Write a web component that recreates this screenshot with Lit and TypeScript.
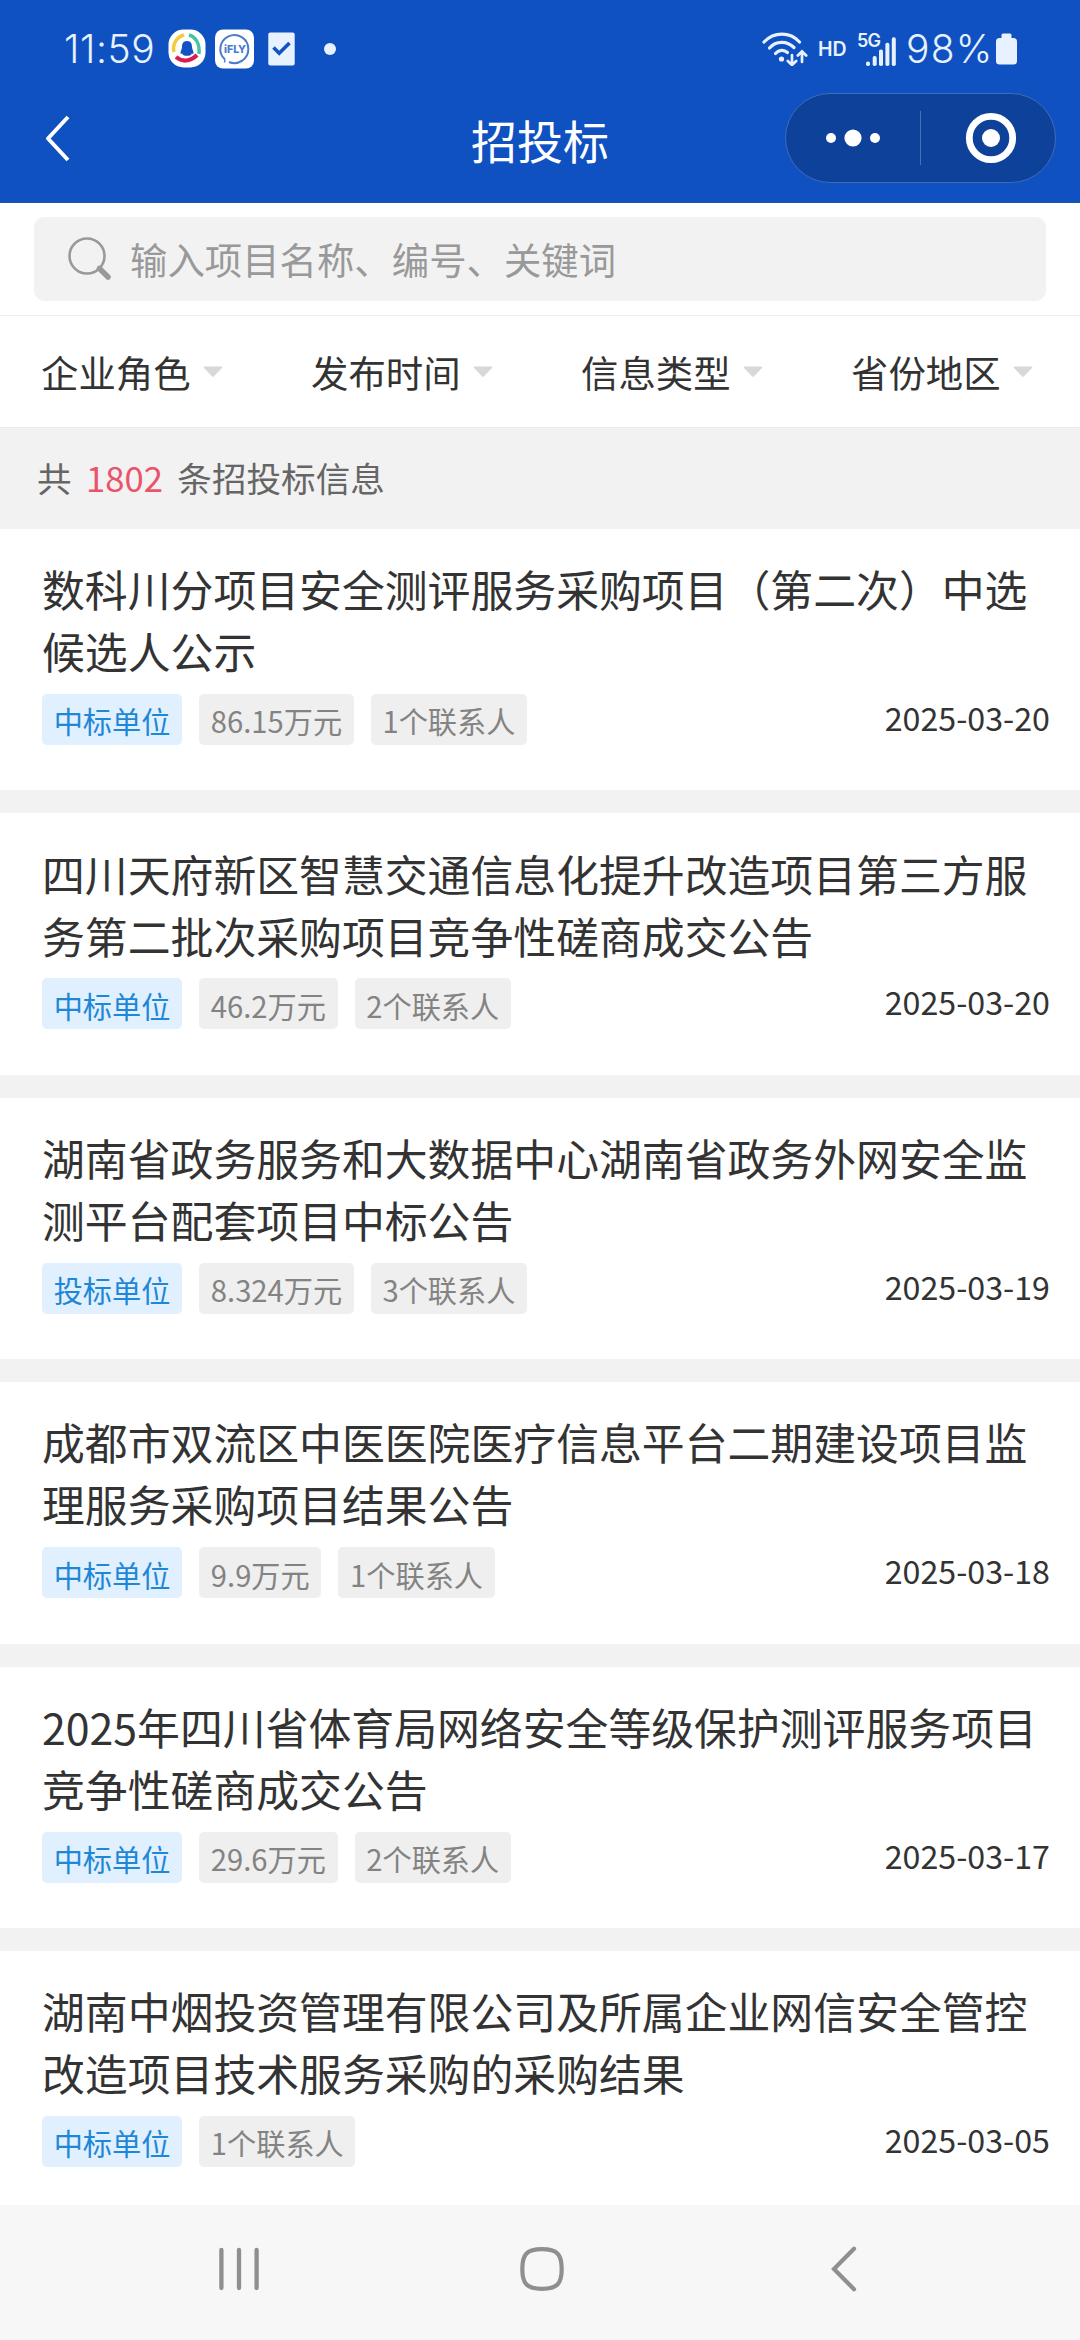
import { LitElement, html, css, svg } from "lit";
import { customElement, property } from "lit/decorators.js";

interface Bid {
  title: string;
  role: string;
  tags: string[];
  date: string;
}

const FILTERS = ["企业角色", "发布时间", "信息类型", "省份地区"];

const BIDS: Bid[] = [
  { title: "数科川分项目安全测评服务采购项目（第二次）中选候选人公示", role: "中标单位", tags: ["86.15万元", "1个联系人"], date: "2025-03-20" },
  { title: "四川天府新区智慧交通信息化提升改造项目第三方服务第二批次采购项目竞争性磋商成交公告", role: "中标单位", tags: ["46.2万元", "2个联系人"], date: "2025-03-20" },
  { title: "湖南省政务服务和大数据中心湖南省政务外网安全监测平台配套项目中标公告", role: "投标单位", tags: ["8.324万元", "3个联系人"], date: "2025-03-19" },
  { title: "成都市双流区中医医院医疗信息平台二期建设项目监理服务采购项目结果公告", role: "中标单位", tags: ["9.9万元", "1个联系人"], date: "2025-03-18" },
  { title: "2025年四川省体育局网络安全等级保护测评服务项目竞争性磋商成交公告", role: "中标单位", tags: ["29.6万元", "2个联系人"], date: "2025-03-17" },
  { title: "湖南中烟投资管理有限公司及所属企业网信安全管控改造项目技术服务采购的采购结果", role: "中标单位", tags: ["1个联系人"], date: "2025-03-05" },
];

@customElement("status-bar")
class StatusBar extends LitElement {
  static styles = css`
    :host { display: block; }
    .bar {
      display: flex; align-items: center; justify-content: space-between;
      box-sizing: border-box; height: 88px; padding: 10px 63px 0 64px;
      color: #e8f1ff; font-family: Inter, Roboto, sans-serif;
    }
    .group { display: flex; align-items: center; height: 78px; }
    .big { font-size: 39px; font-weight: 350; line-height: 46px; white-space: nowrap; }
    .time { width: 104px; letter-spacing: 0.6px; }
    .pct { width: 89px; letter-spacing: 1.2px; }
    svg { display: block; flex: none; }
    .gap { margin-left: 9px; }
    .gap-lg { margin-left: 14px; }
    .dot { width: 12px; height: 12px; border-radius: 50%; background: #e8f1ff; margin-left: 29px; }
    .hd { font-size: 19.5px; font-weight: 600; width: 39px; line-height: 20px; margin-left: 10px; }
    .g5 { font: 600 18px Inter, Roboto, sans-serif; fill: #e8f1ff; letter-spacing: -0.8px; }
    .fly { font: 800 10.5px Inter, Roboto, sans-serif; fill: #4a7ccc; }
  `;
  render() {
    return html`<div class="bar">
      <div class="group">
        <span class="big time">11:59</span>
        <svg width="38" height="40" viewBox="0 0 38 40">
          <rect x="0.5" y="0.5" width="37" height="38" rx="15" fill="#fff"/>
          <g fill="none" stroke-width="3.4">
            <path d="M6 23 C4 15 9 8 16 6" stroke="#f2cb3d"/>
            <path d="M21 6 C28 8 32 15 31 25" stroke="#45c4a0"/>
            <path d="M8 28 C14 33 22 33 29 26" stroke="#d81e50" stroke-width="4.2"/>
          </g>
          <path d="M19 12 c-4 0-5 3-5 6 c0 2-1.500 4-1.500 6 c0 1.500 1 1 1.600 .2 c.5 2 2 2.600 4.900 2.600 s4.400-.6 4.900-2.600 c.6 .8 1.600 1.300 1.600-.2 c0-2-1.500-4-1.500-6 c0-3-1-6-5-6z" fill="#1153c4"/>
        </svg>
        <svg class="gap" width="39" height="40" viewBox="0 0 39 40">
          <rect x="0" y="0.5" width="39" height="39" rx="8" fill="#fff"/>
          <path d="M10 30.500 A14 14 0 1 1 14 33" fill="none" stroke="#4a7ccc" stroke-width="2"/>
          <path d="M10 30.500 l-.5 3" stroke="#4a7ccc" stroke-width="1.500"/>
          <text class="fly" x="9" y="24" textLength="22" lengthAdjust="spacingAndGlyphs">iFLY</text>
        </svg>
        <svg class="gap-lg" width="27" height="34" viewBox="0 0 27 34">
          <rect x="0.3" y="0.500" width="26.400" height="33" rx="2" fill="#e8f1ff"/>
          <path d="M5.500 15.500 l5.700 5.700 L21.500 11" fill="none" stroke="#1153c1" stroke-width="3.600"/>
        </svg>
        <span class="dot"></span>
      </div>
      <div class="group">
        <svg width="46" height="34" viewBox="0 0 46 34" fill="none" stroke="#e8f1ff" stroke-width="3.200" stroke-linecap="round">
          <path d="M2 10 C12 -0.500 28 -0.500 37.500 10"/>
          <path d="M7.500 16 C14 8.500 25 8.500 32 15.500"/>
          <path d="M13.500 21.500 C17 17.500 22 17.300 25.500 20.500"/>
          <circle cx="19.500" cy="27" r="2.600" fill="#e8f1ff" stroke="none"/>
          <g stroke-width="2.700"><path d="M30 23 V33 M25.800 29 L30 33 L34.200 29"/>
          <path d="M40 30 V19.500 M35.800 23.500 L40 19.300 L44.200 23.500"/></g>
        </svg>
        <span class="hd">HD</span>
        <svg width="40" height="36" viewBox="0 0 40 36">
          <text class="g5" x="0" y="16">5G</text>
          ${[[9, 30.5], [15.7, 25], [22, 18.5], [28.4, 11.7], [34.8, 6.3]].map(
            ([x, y]) => svg`<rect x=${x} y=${y} width="4" height=${35 - y} rx="1.8" fill="#e8f1ff"/>`)}
        </svg>
        <span class="gap big pct">98%</span>
        <svg width="22" height="32" viewBox="0 0 22 32">
          <path d="M8 0.500 h7 q1.500 0 1.500 1.500 v3 h2 q3.500 0 3.500 3.500 V28 q0 3.500 -3.500 3.500 H4.500 q-3.500 0 -3.500 -3.500 V8.500 q0 -3.500 3.500 -3.500 h2 v-3 q0 -1.500 1.500 -1.500z" fill="#e8f1ff"/>
        </svg>
      </div>
    </div>`;
  }
}

@customElement("nav-header")
class NavHeader extends LitElement {
  static styles = css`
    :host { display: block; }
    .nav {
      box-sizing: border-box; height: 115px; border-bottom: 1px solid #2b5399;
      display: grid; grid-template-columns: 295px 1fr 295px; padding: 0 24px 0 45px;
    }
    .back { display: block; margin-top: 26px; }
    .title {
      margin: 0 0 0 -21px; text-align: center; color: #fff; font-size: 46px; font-weight: 400; line-height: 103px;
    }
    .capsule {
      box-sizing: border-box; justify-self: end; width: 271px; height: 90px; margin-top: 5px;
      border: 1px solid #3f6cba; border-radius: 45px; background: #0e4199;
      display: flex; align-items: center;
    }
    svg { display: block; }
    .sep { width: 1px; height: 54px; background: #4a70b2; }
    .half { flex: 1; display: flex; justify-content: center; }
  `;
  render() {
    return html`<div class="nav">
      <svg class="back" width="26" height="50" viewBox="0 0 26 50" fill="none" stroke="#fff" stroke-width="4" stroke-linejoin="round">
        <path d="M23 3 L3 24.500 L23 46"/>
      </svg>
      <h1 class="title">招投标</h1>
      <div class="capsule">
        <div class="half"><svg width="56" height="20" viewBox="0 0 56 20" fill="#fff">
          <circle cx="6" cy="10" r="5"/><circle cx="28" cy="10" r="8.600"/><circle cx="50" cy="10" r="5"/>
        </svg></div>
        <span class="sep"></span>
        <div class="half"><svg width="60" height="52" viewBox="0 0 60 52">
          <circle cx="33" cy="26" r="21.700" fill="none" stroke="#fff" stroke-width="6.800"/>
          <circle cx="33" cy="26" r="9" fill="#fff"/>
        </svg></div>
      </div>
    </div>`;
  }
}

@customElement("bid-card")
class BidCard extends LitElement {
  @property({ attribute: false }) bid!: Bid;
  static styles = css`
    :host { display: block; }
    .card { box-sizing: border-box; height: 261.4px; padding: 28.3px 30px 0 42px; background: #fff; }
    .title { margin: 0; font-size: 42.85px; font-weight: 400; line-height: 62px; color: #333; height: 124px; }
    .meta { display: flex; align-items: center; gap: 17px; margin-top: 12.7px; height: 51px; }
    .tag {
      box-sizing: border-box; height: 51px; padding: 1.5px 11.7px 0; border-radius: 5px;
      font-size: 29.2px; line-height: 51px; color: #838383; background: #efefef; white-space: nowrap;
    }
    .role { color: #1e87d6; background: #e1f0ff; }
    .date { margin: -5px 0 0 auto; font-size: 32.2px; line-height: 48px; color: #333; }
  `;
  render() {
    const b = this.bid;
    return html`<article class="card">
      <h2 class="title">${b.title}</h2>
      <div class="meta">
        <span class="tag role">${b.role}</span>
        ${b.tags.map((t) => html`<span class="tag">${t}</span>`)}
        <time class="date">${b.date}</time>
      </div>
    </article>`;
  }
}

@customElement("system-nav")
class SystemNav extends LitElement {
  static styles = css`
    :host { display: block; }
    .nav {
      height: 135px; background: #f7f7f7; display: flex; justify-content: space-between;
      align-items: center; padding: 0 214px 0 217px; box-sizing: border-box;
    }
    svg { display: block; margin-top: -7px; }
  `;
  render() {
    return html`<div class="nav">
      <svg width="44" height="48" viewBox="0 0 44 48" stroke="#8f8f8f" stroke-width="4.300" stroke-linecap="round">
        <path d="M4.400 5 V43 M22 5 V43 M39.600 5 V43"/>
      </svg>
      <svg width="48" height="48" viewBox="0 0 48 48" fill="none" stroke="#8f8f8f" stroke-width="4.200">
        <path d="M24 4.200 C39 4.200 43.700 9 43.700 24 S39 43.800 24 43.800 S4.300 39 4.300 24 S9 4.200 24 4.200z"/>
      </svg>
      <svg width="44" height="48" viewBox="-8 0 44 48" fill="none" stroke="#8f8f8f" stroke-width="4.200" stroke-linecap="round">
        <path d="M24 3.800 L4 24 L24 44.200"/>
      </svg>
    </div>`;
  }
}

@customElement("app-root")
class AppRoot extends LitElement {
  static styles = css`
    :host {
      display: flex; flex-direction: column; width: 1080px; height: 2340px; overflow: hidden;
      background: #f2f2f2; font-family: "Noto Sans CJK SC", sans-serif;
    }
    .top { background: #1051c1; flex: none; }
    .search { flex: none; background: #fff; height: 113px; box-sizing: border-box; padding: 14px 34px 0; border-bottom: 1px solid #eee; }
    .field {
      display: flex; align-items: center; height: 84px; border-radius: 10px; background: #f2f2f2;
      padding-left: 32px; color: #999; font-size: 37.4px; line-height: 54px;
    }
    .field svg { margin: -2px 18px 0 0; }
    .filters { flex: none; display: grid; grid-template-columns: repeat(4, 270px); height: 111px; background: #fff; }
    .filter {
      display: flex; align-items: center; padding: 1px 0 0 41px; gap: 12px;
      font-size: 37.4px; line-height: 54px; color: #333;
    }
    .filter svg { margin-top: -1px; }
    .count {
      flex: none; height: 102px; padding: 0 0 4px 37px; box-sizing: border-box; display: flex; align-items: center;
      gap: 14.5px; font-size: 34.6px; line-height: 50px; color: #666; border-top: 1px solid #ebebeb;
    }
    .num { color: #e9546a; }
    .list { flex: 1; min-height: 0; overflow: hidden; display: flex; flex-direction: column; gap: 23px; }
    .list bid-card { flex: none; }
    system-nav { flex: none; }
  `;
  render() {
    return html`
      <header class="top"><status-bar></status-bar><nav-header></nav-header></header>
      <div class="search"><div class="field">
        <svg width="46" height="46" viewBox="0 0 46 46" fill="none" stroke="#999">
          <circle cx="21" cy="21" r="17.500" stroke-width="2.600"/>
          <path d="M33.500 33.500 L42 42" stroke-width="5.500" stroke-linecap="round"/>
        </svg>
        <span>输入项目名称、编号、关键词</span>
      </div></div>
      <div class="filters">
        ${FILTERS.map((f) => html`<div class="filter"><span>${f}</span>
          <svg width="20" height="12" viewBox="0 0 20 12"><path d="M1.500 .5 H18.500 Q20 .7 19 2 L10.800 10.600 Q10 11.400 9.200 10.600 L1 2 Q0 .7 1.500 .5z" fill="#d8d8d8"/></svg>
        </div>`)}
      </div>
      <div class="count"><span>共</span><span class="num">1802</span><span>条招投标信息</span></div>
      <main class="list">${BIDS.map((b) => html`<bid-card .bid=${b}></bid-card>`)}</main>
      <system-nav></system-nav>
    `;
  }
}
